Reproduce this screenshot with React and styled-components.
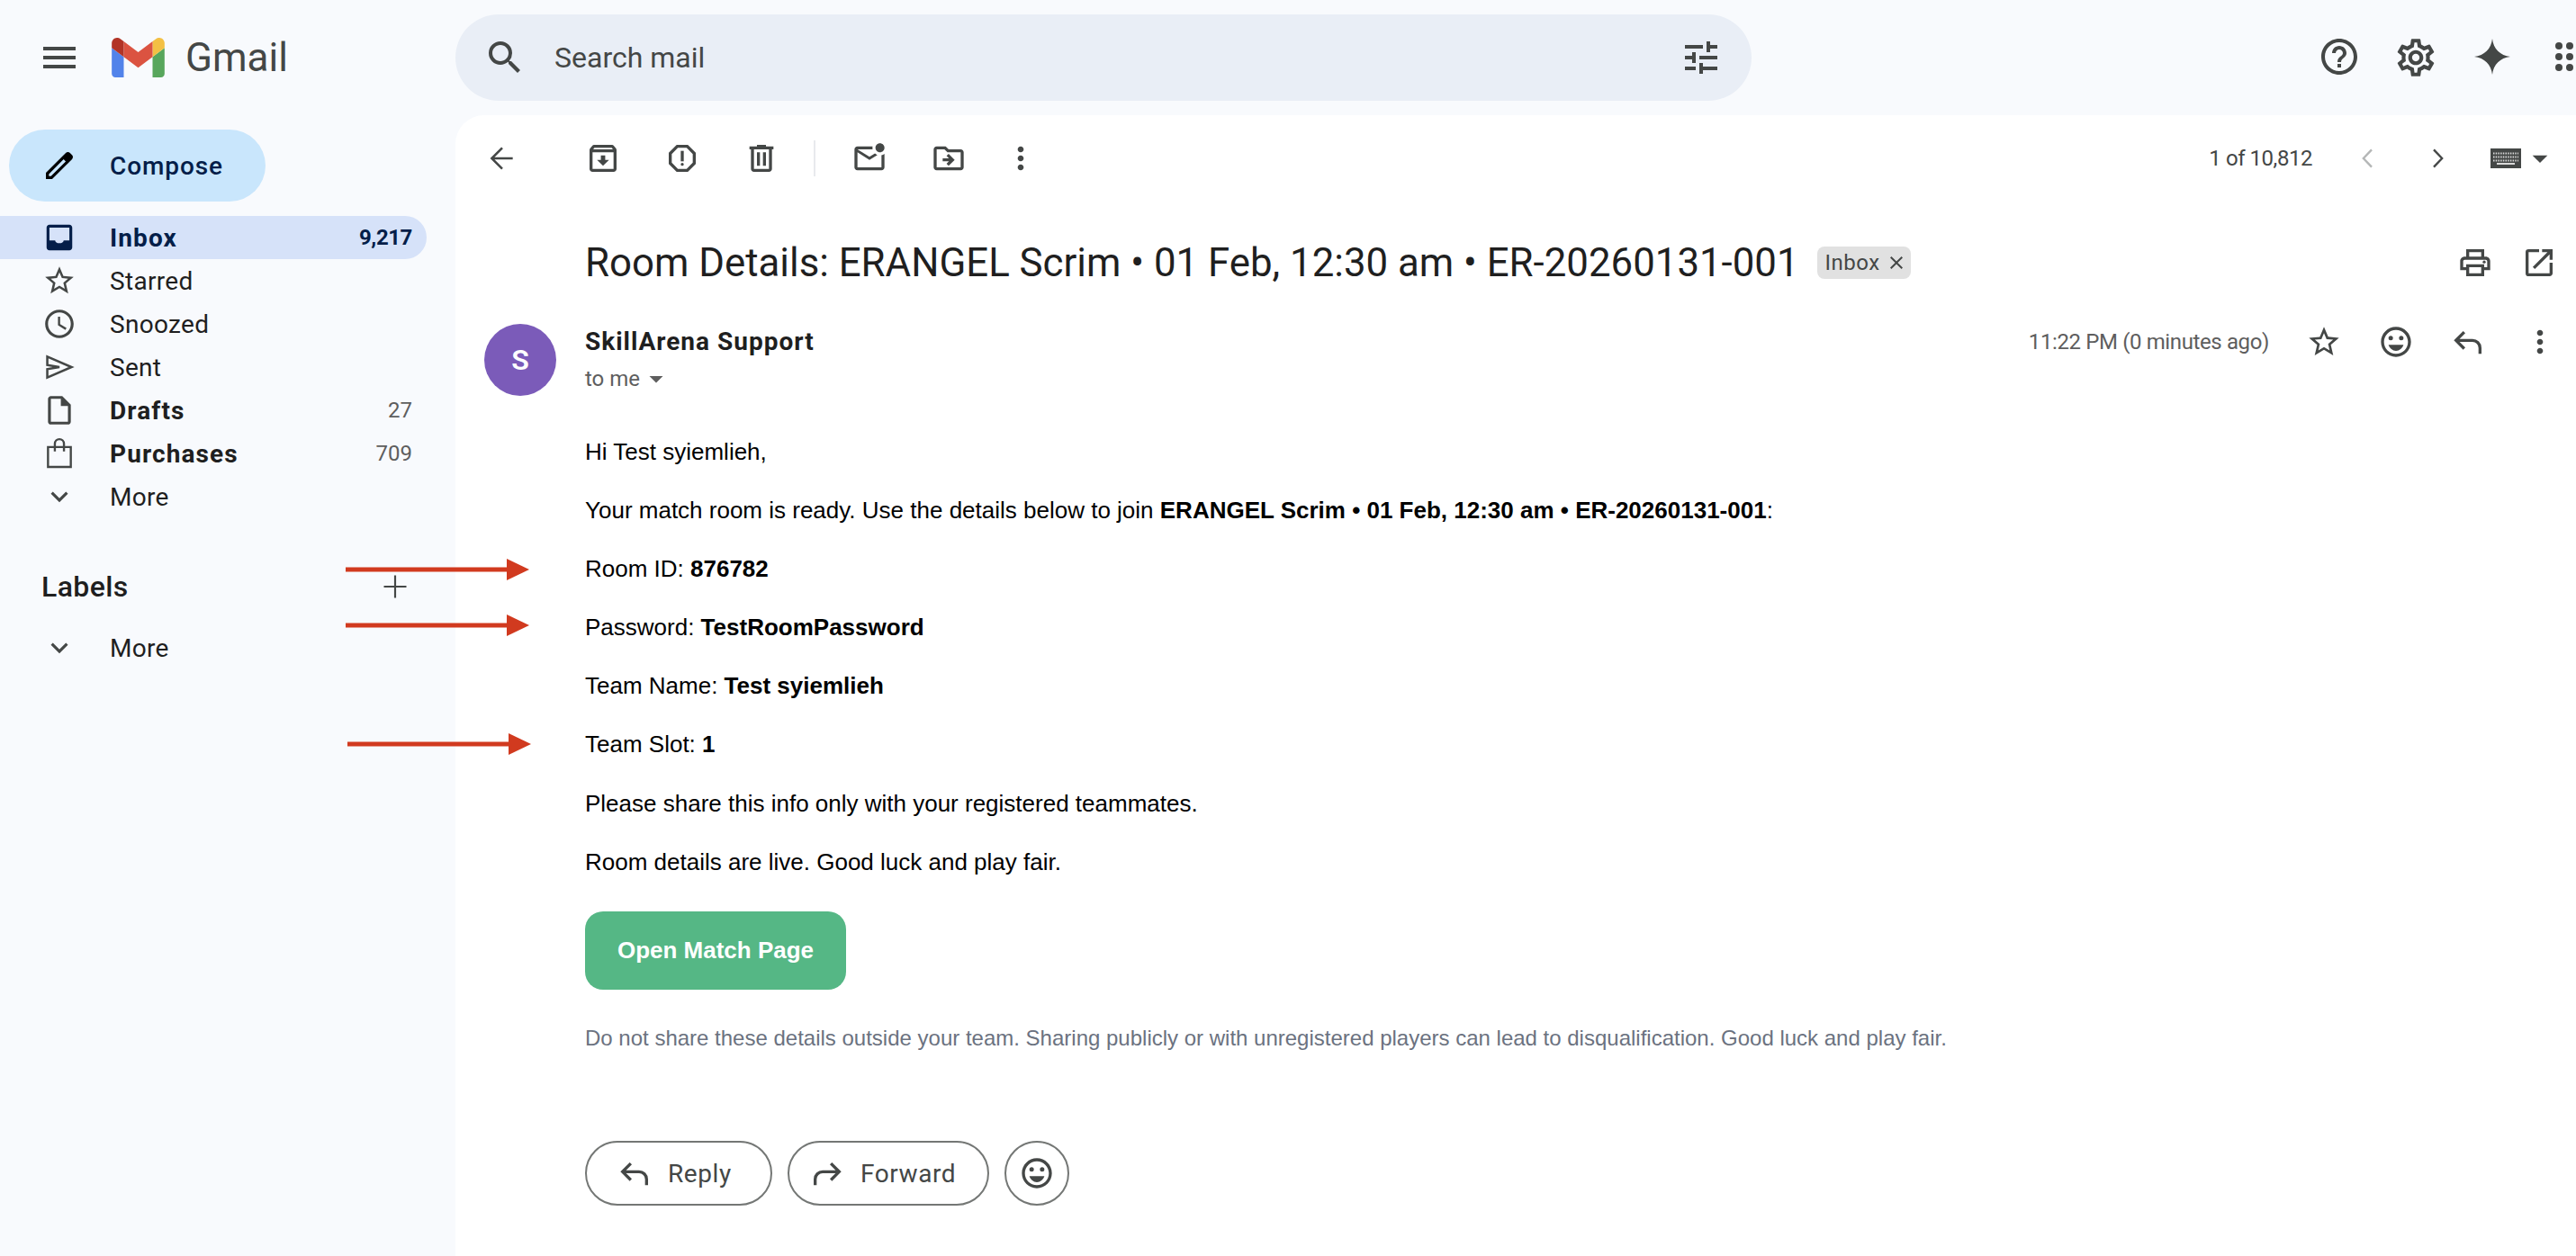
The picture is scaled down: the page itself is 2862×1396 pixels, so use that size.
import React from 'react';
import styled, { createGlobalStyle } from 'styled-components';
import {
    MdMenu, MdSearch, MdTune, MdHelpOutline, MdOutlineSettings,
    MdOutlineArchive, MdOutlineReport, MdOutlineMarkEmailUnread,
    MdOutlineDriveFileMove, MdMoreVert, MdArrowDropDown, MdOutlinePrint,
    MdOutlineOpenInNew, MdStarBorder, MdOutlineWatchLater, MdOutlineInsertDriveFile,
    MdExpandMore, MdOutlineEmojiEmotions, MdClose,
} from 'react-icons/md';

const UI_FONT = `Roboto, 'Noto Sans', sans-serif`;
const MAIL_FONT = `'Liberation Sans', Arial, sans-serif`;

const GlobalStyle = createGlobalStyle`
    html, body {
        margin: 0;
        background: #f8fafd;
    }
    * {
        box-sizing: border-box;
    }
`;

function GmailLogo() {
    return (
        <LogoSvg viewBox='52 42 88 66'>
            <path fill='#5283ea' d='M58 108h14V74L52 59v43c0 3.32 2.69 6 6 6' />
            <path fill='#58a65c' d='M120 108h14c3.32 0 6-2.69 6-6V59l-20 15' />
            <path fill='#f3c044' d='M120 48v26l20-15v-8c0-7.42-8.47-11.65-14.4-7.2' />
            <path fill='#db5341' d='M72 74V48l24 18 24-18v26L96 92' />
            <path fill='#b23427' d='M52 51v8l20 15V48l-5.6-4.2c-5.94-4.45-14.4-.22-14.4 7.2' />
        </LogoSvg>
    );
}

// filled material-style glyph
function Glyph({ d, size = 40, color = 'currentColor' }) {
    return (
        <svg width={size} height={size} viewBox='0 0 24 24' fill={color}>
            <path d={d} />
        </svg>
    );
}

// thin stroked glyph
function Line({ d, size = 40, weight = 1.5, color = 'currentColor' }) {
    return (
        <svg width={size} height={size} viewBox='0 0 24 24' fill='none' stroke={color} strokeWidth={weight}>
            <path d={d} />
        </svg>
    );
}

const PENCIL = 'M20.41 4.94l-1.35-1.35c-.78-.78-2.05-.78-2.83 0L3 16.82V21h4.18L20.41 7.77c.79-.78.79-2.05 0-2.83zm-14 14.12L5 19v-1.36l9.82-9.82 1.41 1.41-9.82 9.83z';
const SPARK = 'M12 2c.6 5.6 4.4 9.4 10 10-5.6.6-9.4 4.4-10 10-.6-5.6-4.4-9.4-10-10 5.6-.6 9.4-4.4 10-10z';
const INBOX = 'M19 3H5c-1.1 0-2 .9-2 2v14c0 1.1.9 2 2 2h14c1.1 0 2-.9 2-2V5c0-1.1-.9-2-2-2zm0 11h-4c0 1.1-1.35 2-3 2s-3-.9-3-2H5V5h14v9z';
const TRASH = 'M15 4V3H9v1H4v2h1v13c0 1.1.9 2 2 2h10c1.1 0 2-.9 2-2V6h1V4h-5zm2 15H7V6h10v13zM9 8h2v9H9zm4 0h2v9h-2z';

function AppsIcon() {
    return (
        <svg width='48' height='48' viewBox='0 0 24 24' fill='#444746'>
            {[6, 12, 18].map((y) => [6, 12, 18].map((x) => <circle key={`${x}-${y}`} cx={x} cy={y} r='2' />))}
        </svg>
    );
}

function KeyboardIcon() {
    return (
        <svg width='36' height='24' viewBox='0 0 36 24'>
            <rect x='1' y='1' width='34' height='22' fill='#444746' />
            <path d='M4 6.5h28M4 10.5h28M4 14.5h28' stroke='#d8d8d8' strokeWidth='2' strokeDasharray='1.5 1.2' />
            <rect x='8' y='17' width='20' height='2' fill='#d8d8d8' />
        </svg>
    );
}

function ReplyArrow({ size = 40, flip }) {
    return (
        <FlipSvg $flip={flip} width={size} height={size} viewBox='0 0 24 24' fill='none' stroke='#444746' strokeWidth='2'>
            <path d='M9.5 5.5L4 11l5.5 5.5M4 11h11a5 5 0 0 1 5 5v4' />
        </FlipSvg>
    );
}

function RedArrow({ top, left }) {
    return (
        <ArrowSvg $top={top} $left={left} width='204' height='26' viewBox='0 0 204 26'>
            <rect x='0' y='10.5' width='180' height='5' fill='#d13a1f' />
            <path d='M179 1l25 12-25 12z' fill='#d13a1f' />
        </ArrowSvg>
    );
}

const navItems = [
    { label: 'Inbox', icon: <Glyph d={INBOX} size={38} color='#041e49' />, count: '9,217', active: true },
    { label: 'Starred', icon: <MdStarBorder size={38} /> },
    { label: 'Snoozed', icon: <MdOutlineWatchLater size={38} /> },
    { label: 'Sent', icon: <Line d='M3.5 4.7L20.5 12 3.5 19.3v-5.8L12 12 3.5 10.5z' size={38} weight={1.6} /> },
    { label: 'Drafts', icon: <MdOutlineInsertDriveFile size={38} />, count: '27', bold: true },
    { label: 'Purchases', icon: <Line d='M4 7.5h16v14H4zM8.8 7.5V5.2a3.2 3.2 0 0 1 6.4 0v2.3M8.8 7.5v3M15.2 7.5v3' size={38} weight={1.5} />, count: '709', bold: true },
    { label: 'More', icon: <MdExpandMore size={38} /> },
];

export default function App() {
    return (
        <Page>
            <GlobalStyle />
            <TopBar>
                <Brand>
                    <MenuButton>
                        <MdMenu size={48} />
                    </MenuButton>
                    <GmailLogo />
                    <BrandName>Gmail</BrandName>
                </Brand>
                <SearchBox>
                    <MdSearch size={48} />
                    <SearchText>Search mail</SearchText>
                    <MdTune size={48} />
                </SearchBox>
                <TopActions>
                    <TopAction><MdHelpOutline size={48} /></TopAction>
                    <TopAction><MdOutlineSettings size={50} /></TopAction>
                    <TopAction><Glyph d={SPARK} size={48} /></TopAction>
                    <TopAction><AppsIcon /></TopAction>
                </TopActions>
            </TopBar>

            <Body>
                <Sidebar>
                    <ComposeButton>
                        <Glyph d={PENCIL} color='#000' />
                        <span>Compose</span>
                    </ComposeButton>
                    <NavList>
                        {navItems.map((item) => (
                            <NavRow key={item.label} $active={item.active} $bold={item.bold}>
                                <NavIcon>{item.icon}</NavIcon>
                                <NavLabel>{item.label}</NavLabel>
                                {item.count && <NavCount $strong={item.active}>{item.count}</NavCount>}
                            </NavRow>
                        ))}
                    </NavList>
                    <LabelsHead>
                        <span>Labels</span>
                        <PlusSlot><Line d='M12 4.5v15M4.5 12h15' weight={1.3} color='#444746' /></PlusSlot>
                    </LabelsHead>
                    <NavRow>
                        <NavIcon><MdExpandMore size={38} /></NavIcon>
                        <NavLabel>More</NavLabel>
                    </NavRow>
                </Sidebar>

                <Panel>
                    <Toolbar>
                        <ToolButton $back><Line d='M19 12H5M12 5l-7 7 7 7' /></ToolButton>
                        <ToolButton><MdOutlineArchive size={40} /></ToolButton>
                        <ToolButton><MdOutlineReport size={40} /></ToolButton>
                        <ToolButton><Glyph d={TRASH} /></ToolButton>
                        <ToolDivider />
                        <ToolButton><MdOutlineMarkEmailUnread size={40} /></ToolButton>
                        <ToolButton><MdOutlineDriveFileMove size={40} /></ToolButton>
                        <ToolButton $narrow><MdMoreVert size={40} /></ToolButton>
                        <Pager>
                            <PagerText>1 of 10,812</PagerText>
                            <PagerButton $disabled><Line d='M15 6.2L9.5 12l5.5 5.8' weight={1.4} /></PagerButton>
                            <PagerButton><Line d='M9 6.2l5.5 5.8L9 17.8' weight={1.4} /></PagerButton>
                            <KeyboardPick>
                                <KeyboardIcon />
                                <MdArrowDropDown size={40} />
                            </KeyboardPick>
                        </Pager>
                    </Toolbar>

                    <SubjectRow>
                        <Subject>Room Details: ERANGEL Scrim • 01 Feb, 12:30 am • ER-20260131-001</Subject>
                        <InboxChip>
                            Inbox
                            <MdClose size={24} />
                        </InboxChip>
                        <SubjectActions>
                            <MdOutlinePrint size={40} />
                            <MdOutlineOpenInNew size={40} />
                        </SubjectActions>
                    </SubjectRow>

                    <MessageHead>
                        <Avatar>S</Avatar>
                        <Sender>
                            <SenderName>SkillArena Support</SenderName>
                            <ToMe>
                                to me
                                <MdArrowDropDown size={36} />
                            </ToMe>
                        </Sender>
                        <MessageMeta>
                            <MessageTime>11:22 PM (0 minutes ago)</MessageTime>
                            <MetaButton><MdStarBorder size={40} /></MetaButton>
                            <MetaButton><MdOutlineEmojiEmotions size={40} /></MetaButton>
                            <MetaButton><ReplyArrow /></MetaButton>
                            <MetaButton><MdMoreVert size={40} /></MetaButton>
                        </MessageMeta>
                    </MessageHead>

                    <MailBody>
                        <MailLine>Hi Test syiemlieh,</MailLine>
                        <MailLine>
                            Your match room is ready. Use the details below to join{' '}
                            <strong>ERANGEL Scrim • 01 Feb, 12:30 am • ER-20260131-001</strong>:
                        </MailLine>
                        <MailLine>Room ID: <strong>876782</strong></MailLine>
                        <MailLine>Password: <strong>TestRoomPassword</strong></MailLine>
                        <MailLine>Team Name: <strong>Test syiemlieh</strong></MailLine>
                        <MailLine>Team Slot: <strong>1</strong></MailLine>
                        <MailLine>Please share this info only with your registered teammates.</MailLine>
                        <MailLine>Room details are live. Good luck and play fair.</MailLine>
                        <MatchButton>Open Match Page</MatchButton>
                        <MailNote>
                            Do not share these details outside your team. Sharing publicly or with unregistered players can lead to disqualification. Good luck and play fair.
                        </MailNote>
                    </MailBody>

                    <ReplyRow>
                        <PillButton>
                            <ReplyArrow />
                            Reply
                        </PillButton>
                        <PillButton $forward>
                            <ReplyArrow flip />
                            Forward
                        </PillButton>
                        <EmojiButton><MdOutlineEmojiEmotions size={40} /></EmojiButton>
                    </ReplyRow>
                </Panel>
            </Body>

            <RedArrow top={620} left={384} />
            <RedArrow top={682} left={384} />
            <RedArrow top={814} left={386} />
        </Page>
    );
}

const Page = styled.div`
    position: relative;
    width: 2862px;
    height: 1396px;
    overflow: hidden;
    background: #f8fafd;
    color: #444746;
    font-family: ${UI_FONT};
`;
const TopBar = styled.header`
    display: flex;
    align-items: center;
    height: 128px;
`;
const Brand = styled.div`
    display: flex;
    align-items: center;
    flex: 0 0 506px;
`;
const MenuButton = styled.div`
    display: flex;
    justify-content: center;
    width: 48px;
    margin: 0 34px 0 42px;
`;
const LogoSvg = styled.svg`
    width: 59px;
    height: 44px;
`;
const BrandName = styled.span`
    margin-left: 23px;
    font-size: 44px;
    color: #444746;
`;
const SearchBox = styled.div`
    display: flex;
    align-items: center;
    flex: 0 0 1440px;
    height: 96px;
    padding: 0 32px 0 31px;
    border-radius: 48px;
    background: #e9eef6;
`;
const SearchText = styled.span`
    flex: 1;
    margin-left: 31px;
    font-size: 32px;
    color: #444746;
`;
const TopActions = styled.div`
    display: flex;
    flex-shrink: 0;
    margin-left: 610px;
`;
const TopAction = styled.div`
    display: flex;
    justify-content: center;
    flex: 0 0 85.3px;
`;
const Body = styled.div`
    display: flex;
    height: 1268px;
`;
const Sidebar = styled.nav`
    flex: 0 0 506px;
`;
const ComposeButton = styled.div`
    display: flex;
    align-items: center;
    gap: 36px;
    width: 285px;
    height: 80px;
    margin: 16px 0 16px 10px;
    padding-left: 36px;
    border-radius: 40px;
    background: #c9e6fc;
    color: #041e49;
    font-size: 28px;
    font-weight: 500;
    letter-spacing: 0.9px;
`;
const NavList = styled.div`
    display: flex;
    flex-direction: column;
`;
const NavRow = styled.div`
    display: flex;
    align-items: center;
    width: 474px;
    height: 48px;
    padding-right: 16px;
    border-radius: 0 24px 24px 0;
    background: ${(p) => (p.$active ? '#d6e2f9' : 'transparent')};
    color: ${(p) => (p.$active ? '#041e49' : '#1f1f1f')};
    font-size: 28px;
    font-weight: ${(p) => (p.$active || p.$bold ? 700 : 400)};
    letter-spacing: ${(p) => (p.$active || p.$bold ? 1.1 : 0.3)}px;
`;
const NavIcon = styled.span`
    display: flex;
    justify-content: center;
    flex: 0 0 38px;
    margin: 0 37px 0 47px;
    color: #444746;
`;
const NavLabel = styled.span`
    flex: 1;
`;
const NavCount = styled.span`
    color: ${(p) => (p.$strong ? '#041e49' : '#5e5e5e')};
    font-size: 24px;
    font-weight: ${(p) => (p.$strong ? 700 : 400)};
    letter-spacing: ${(p) => (p.$strong ? -0.4 : 0)}px;
`;
const LabelsHead = styled.div`
    display: flex;
    align-items: center;
    justify-content: space-between;
    width: 459px;
    height: 48px;
    margin: 52px 0 20px;
    padding-left: 46px;
    color: #1f1f1f;
    font-size: 32px;
    font-weight: 500;
    letter-spacing: 0.4px;
`;
const PlusSlot = styled.span`
    display: flex;
`;
const Panel = styled.main`
    flex: 1;
    border-radius: 32px 0 0 0;
    background: #fff;
`;
const Toolbar = styled.div`
    display: flex;
    align-items: center;
    height: 96px;
    padding-left: 8px;
`;
const ToolButton = styled.div`
    display: flex;
    justify-content: center;
    flex: 0 0 ${(p) => (p.$narrow ? 72 : 88)}px;
    margin-right: ${(p) => (p.$back ? 24 : 0)}px;
`;
const ToolDivider = styled.div`
    width: 2px;
    height: 40px;
    margin: 0 16px 0 14px;
    background: #e8eaed;
`;
const Pager = styled.div`
    display: flex;
    align-items: center;
    margin-left: auto;
`;
const PagerText = styled.span`
    margin-right: 21px;
    font-size: 24px;
    letter-spacing: -0.45px;
`;
const PagerButton = styled.div`
    display: flex;
    justify-content: center;
    flex: 0 0 79px;
    color: ${(p) => (p.$disabled ? '#b4b6b6' : '#444746')};
`;
const KeyboardPick = styled.div`
    display: flex;
    align-items: center;
    margin-left: 18px;
    padding-right: 20px;
`;
const SubjectRow = styled.div`
    display: flex;
    align-items: center;
    height: 136px;
    padding-left: 144px;
`;
const Subject = styled.h1`
    margin: 0;
    color: #1f1f1f;
    font-size: 43.8px;
    font-weight: 400;
`;
const InboxChip = styled.span`
    display: flex;
    align-items: center;
    gap: 6px;
    height: 36px;
    margin-left: 20px;
    padding: 0 4px 0 9px;
    border-radius: 8px;
    background: #e1e1e1;
    font-size: 24px;
    letter-spacing: 0.5px;
`;
const SubjectActions = styled.div`
    display: flex;
    gap: 31px;
    margin-left: auto;
    padding-right: 21px;
`;
const MessageHead = styled.div`
    display: flex;
    height: 80px;
    padding-left: 32px;
`;
const Avatar = styled.div`
    display: flex;
    align-items: center;
    justify-content: center;
    width: 80px;
    height: 80px;
    border-radius: 50%;
    background: #7b5bb9;
    color: #fff;
    font-size: 32px;
    font-weight: 600;
`;
const Sender = styled.div`
    margin-left: 32px;
`;
const SenderName = styled.div`
    height: 40px;
    color: #1f1f1f;
    font-size: 28px;
    font-weight: 700;
    letter-spacing: 1px;
    line-height: 40px;
`;
const ToMe = styled.div`
    display: flex;
    align-items: center;
    height: 40px;
    padding-top: 1px;
    font-size: 24px;
    color: #5e5e5e;
`;
const MessageMeta = styled.div`
    display: flex;
    align-items: center;
    height: 40px;
    margin-left: auto;
`;
const MessageTime = styled.span`
    margin-right: 21px;
    color: #5e5e5e;
    font-size: 24px;
    letter-spacing: -0.38px;
`;
const MetaButton = styled.div`
    display: flex;
    justify-content: center;
    flex: 0 0 80px;
`;
const MailBody = styled.div`
    margin-top: 46px;
    padding-left: 144px;
    font-family: ${MAIL_FONT};
    color: #000;
    font-size: 26px;
`;
const MailLine = styled.p`
    height: 32px;
    margin: 0 0 33.1px;
    line-height: 32px;
`;
const MatchButton = styled.div`
    display: flex;
    align-items: center;
    justify-content: center;
    width: 290px;
    height: 87px;
    margin-top: 39.6px;
    border-radius: 20px;
    background: #55b785;
    color: #fff;
    font-size: 26px;
    font-weight: 700;
`;
const MailNote = styled.p`
    margin: 40px 0 0;
    color: #6b7280;
    font-size: 24px;
    line-height: 28px;
`;
const ReplyRow = styled.div`
    display: flex;
    gap: 17px;
    margin-top: 100px;
    padding-left: 144px;
`;
const PillButton = styled.div`
    display: flex;
    align-items: center;
    gap: 17px;
    height: 72px;
    padding: ${(p) => (p.$forward ? '0 35px 0 22px' : '0 43px 0 33px')};
    border: 2px solid #747775;
    border-radius: 36px;
    font-size: 28px;
    font-weight: 400;
    letter-spacing: 0.6px;
`;
const EmojiButton = styled.div`
    display: flex;
    align-items: center;
    justify-content: center;
    width: 72px;
    height: 72px;
    border: 2px solid #747775;
    border-radius: 50%;
`;
const FlipSvg = styled.svg`
    transform: ${(p) => (p.$flip ? 'scaleX(-1)' : 'none')};
`;
const ArrowSvg = styled.svg`
    position: absolute;
    top: ${(p) => p.$top}px;
    left: ${(p) => p.$left}px;
`;
